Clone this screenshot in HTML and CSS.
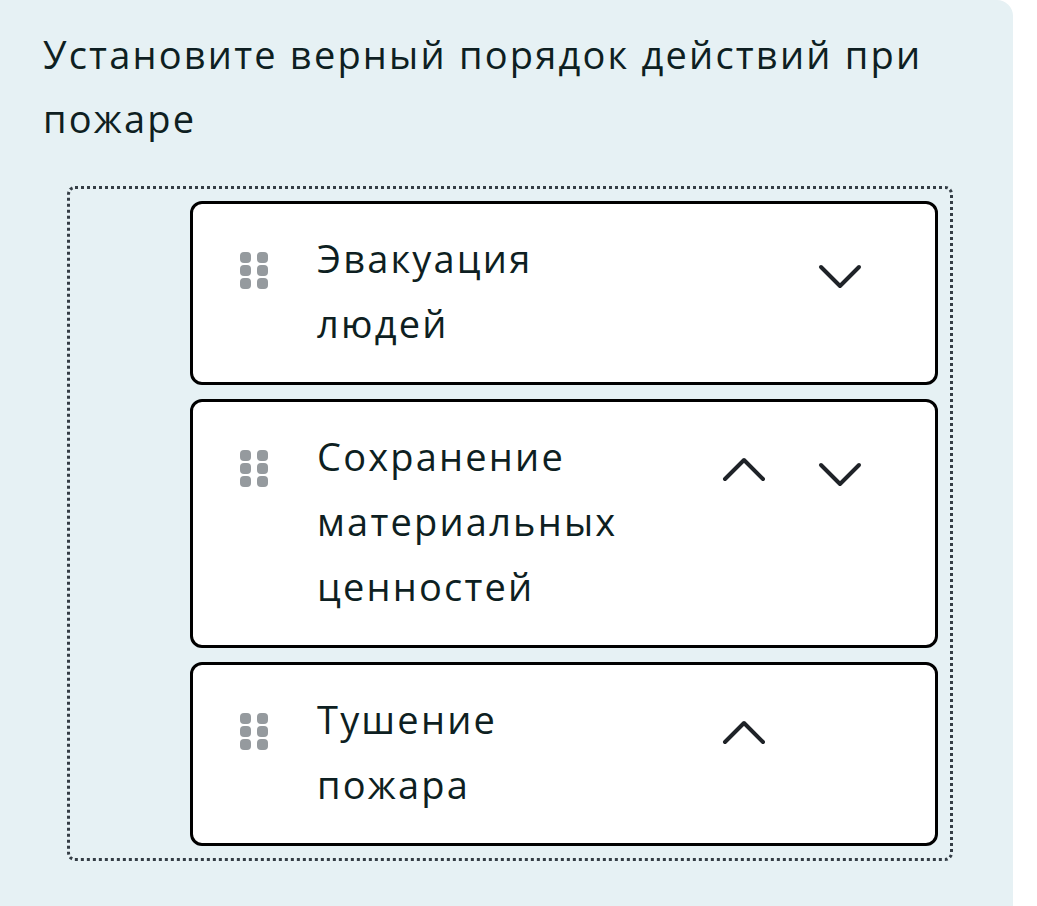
FILE: index.html
```html
<!DOCTYPE html>
<html lang="ru">
<head>
    <meta charset="UTF-8">
    <meta name="viewport" content="width=device-width, initial-scale=1.0">
    <title>Порядок действий</title>
    <link rel="stylesheet" href="styles.css">
</head>
<body>
    <div class="panel">
        <p class="question">Установите верный порядок действий при пожаре</p>

        <!-- Sortable list -->
        <div class="sort-box">
            <div class="sort-item">
                <div class="handle"><span></span><span></span><span></span><span></span><span></span><span></span></div>
                <div class="item-text">Эвакуация людей</div>
                <div class="controls">
                    <button class="move down" aria-label="Вниз">
                        <svg viewBox="0 0 48 48" width="48" height="48"><path d="M6 17 L25 36 L44 17"/></svg>
                    </button>
                </div>
            </div>

            <div class="sort-item">
                <div class="handle"><span></span><span></span><span></span><span></span><span></span><span></span></div>
                <div class="item-text">Сохранение материальных ценностей</div>
                <div class="controls">
                    <button class="move up" aria-label="Вверх">
                        <svg viewBox="0 0 48 48" width="48" height="48"><path d="M6 31 L25 12 L44 31"/></svg>
                    </button>
                    <button class="move down" aria-label="Вниз">
                        <svg viewBox="0 0 48 48" width="48" height="48"><path d="M6 17 L25 36 L44 17"/></svg>
                    </button>
                </div>
            </div>

            <div class="sort-item">
                <div class="handle"><span></span><span></span><span></span><span></span><span></span><span></span></div>
                <div class="item-text">Тушение пожара</div>
                <div class="controls">
                    <button class="move up" aria-label="Вверх">
                        <svg viewBox="0 0 48 48" width="48" height="48"><path d="M6 31 L25 12 L44 31"/></svg>
                    </button>
                </div>
            </div>
        </div>
    </div>
</body>
</html>
```

FILE: styles.css
```css
body {
    margin: 0;
    padding: 0;
    background-color: #fff;
    font-family: "Open Sans", "Noto Sans", sans-serif;
    color: #0e1f22;
}
.panel {
    width: 1013px;
    min-height: 906px;
    padding: 22px 0 40px 43px;
    background-color: #e6f1f4;
    border-top-right-radius: 16px;
    box-sizing: border-box;
}
.question {
    margin: 0;
    font-size: 38px;
    line-height: 64px;
    letter-spacing: 2.2px;
}
.sort-box {
    margin: 36px 60px 0 24px;
    padding: 12px 12px 12px 120px;
    border: 3px dotted #343d45;
    border-radius: 8px;
    display: flex;
    flex-direction: column;
    gap: 14px;
}
.sort-item {
    display: flex;
    align-items: flex-start;
    padding: 22px 72px 26px 47px;
    background-color: #fff;
    border: 3px solid #000;
    border-radius: 12px;
}
.handle {
    display: grid;
    grid-template-columns: 11px 11px;
    gap: 2px 6px;
    margin-top: 26px;
    margin-right: 49px;
}
.handle span {
    width: 11px;
    height: 11px;
    border-radius: 4px;
    background-color: #959a9e;
}
.item-text {
    width: 310px;
    font-size: 38px;
    line-height: 65px;
    letter-spacing: 2.2px;
}
.controls {
    display: grid;
    grid-template-columns: 48px 48px;
    gap: 48px;
    margin-left: 92px;
    margin-top: 24px;
}
.move {
    width: 48px;
    height: 48px;
    padding: 0;
    border: none;
    background: none;
    cursor: pointer;
}
.move.up {
    grid-column: 1;
}
.move.down {
    grid-column: 2;
}
.move svg {
    display: block;
    fill: none;
    stroke: #1f2328;
    stroke-width: 4;
    stroke-linecap: round;
    stroke-linejoin: round;
}
```
